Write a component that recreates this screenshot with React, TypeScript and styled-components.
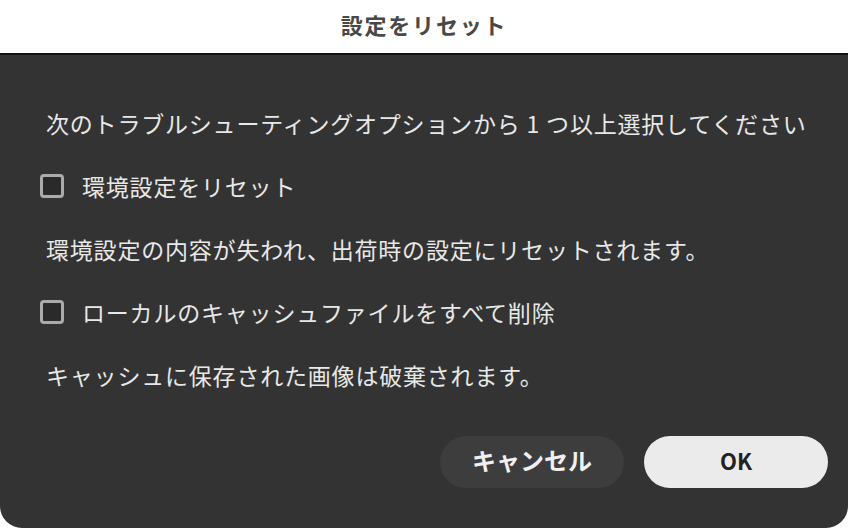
import styled, { createGlobalStyle } from "styled-components"

const Global = createGlobalStyle`
  html, body {
    margin: 0;
    padding: 0;
    background: #fff;
  }
  body {
    font-family: "Noto Sans CJK JP", "Noto Sans", sans-serif;
  }
`

const Dialog = styled.div`
  width: 848px;
  height: 528px;
  display: flex;
  flex-direction: column;
  background: #fff;
`

const TitleBar = styled.header`
  height: 55px;
  box-sizing: border-box;
  padding-bottom: 5px;
  flex: none;
  display: flex;
  align-items: center;
  justify-content: center;
  border-bottom: 2px solid #111;
  h1 {
    margin: 0;
    font-size: 22px;
    font-weight: 700;
    letter-spacing: 1.8px;
    color: #484848;
  }
`

const Panel = styled.main`
  flex: 1;
  background: #333;
  border-radius: 0 0 22px 22px;
  padding: 36px 20px 0 46px;
  display: flex;
  flex-direction: column;
  color: #e8e8e8;
`

const Line = styled.p`
  margin: 0;
  height: 63px;
  display: flex;
  align-items: center;
  font-size: 23px;
  letter-spacing: 0.8px;
  white-space: nowrap;
`

const CheckRow = styled.label`
  height: 63px;
  display: flex;
  align-items: center;
  gap: 18px;
  margin-left: -6px;
  font-size: 23px;
  letter-spacing: 0.8px;
  white-space: nowrap;
`

const Box = styled.span`
  width: 24px;
  height: 24px;
  box-sizing: border-box;
  border: 3px solid #ababab;
  border-radius: 4px;
  background: #2a2a2a;
  flex: none;
`

const Actions = styled.div`
  margin-top: auto;
  margin-bottom: 40px;
  display: flex;
  justify-content: flex-end;
  gap: 20px;
`

const Button = styled.button<{ $primary?: boolean }>`
  width: 184px;
  height: 52px;
  padding: 0 0 5px;
  border: none;
  border-radius: 26px;
  font-family: inherit;
  font-size: ${(p) => (p.$primary ? "22px" : "24px")};
  font-weight: 700;
  background: ${(p) => (p.$primary ? "#ebebeb" : "#3d3d3d")};
  color: ${(p) => (p.$primary ? "#222" : "#f0f0f0")};
`

const App = () => {
  return (
    <Dialog>
      <Global />
      <TitleBar>
        <h1>設定をリセット</h1>
      </TitleBar>
      <Panel>
        <Line>次のトラブルシューティングオプションから 1 つ以上選択してください</Line>
        <CheckRow>
          <Box />
          環境設定をリセット
        </CheckRow>
        <Line>環境設定の内容が失われ、出荷時の設定にリセットされます。</Line>
        <CheckRow>
          <Box />
          ローカルのキャッシュファイルをすべて削除
        </CheckRow>
        <Line>キャッシュに保存された画像は破棄されます。</Line>
        <Actions>
          <Button>キャンセル</Button>
          <Button $primary>OK</Button>
        </Actions>
      </Panel>
    </Dialog>
  )
}

export default App
